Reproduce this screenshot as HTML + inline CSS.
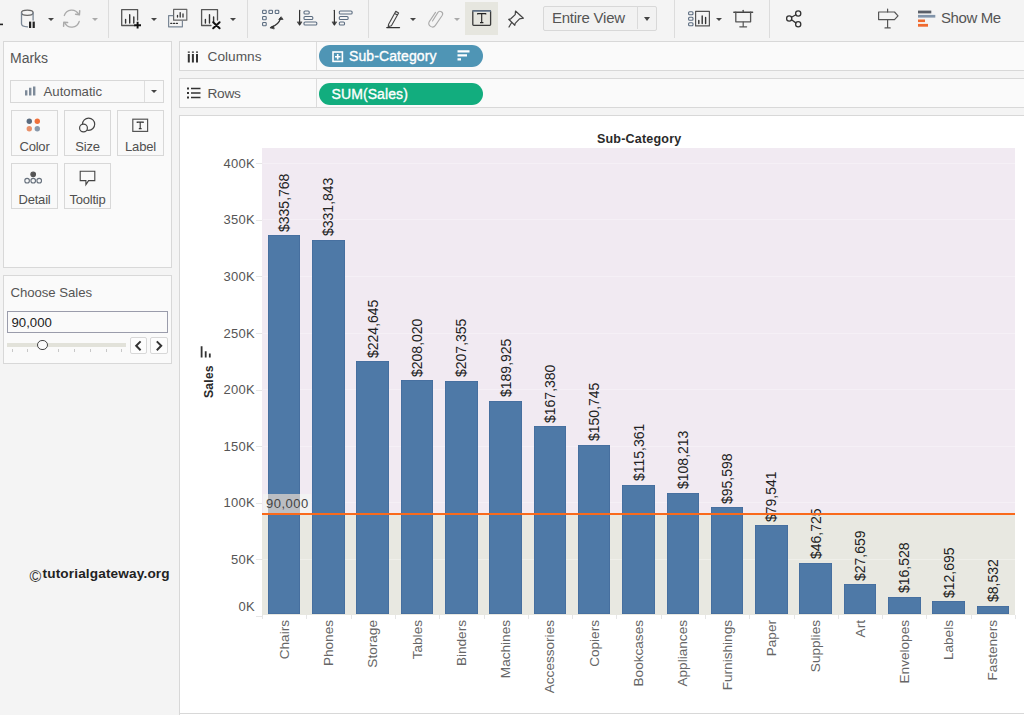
<!DOCTYPE html><html><head><meta charset="utf-8"><style>
*{margin:0;padding:0;box-sizing:border-box}
html,body{width:1024px;height:715px;overflow:hidden;background:#f4f4f4;font-family:"Liberation Sans",sans-serif;position:relative}
.a{position:absolute}
#tb{left:0;top:0;width:1024px;height:40px;background:#f4f4f4}
.sep{position:absolute;top:0;width:1px;height:38px;background:#dcdcdc}
.dd{position:absolute;width:0;height:0;border-left:3px solid transparent;border-right:3px solid transparent;border-top:3.6px solid #444}
.card{position:absolute;background:#fafafa;border:1px solid #d8d8d8}
.btn{position:absolute;background:#f9f9f9;border:1px solid #d8d8d8;font-size:13px;letter-spacing:-0.2px;color:#505050;text-align:center;width:47px;height:46px}
.btn span{position:absolute;left:-5px;right:-5px;top:28px}
.btn svg{position:absolute;left:0;top:0}
.shelf{position:absolute;left:179px;width:845px;height:30px;background:#fafafa;border:1px solid #d8d8d8;border-right:none}
.pill{position:absolute;left:319px;width:164px;height:22px;border-radius:11px;color:#fff;font-size:14px;-webkit-text-stroke:0.35px #fff}
.yl{position:absolute;font-size:13px;letter-spacing:0.3px;color:#555;text-align:right;width:60px;left:195px;line-height:16px}
.bar{position:absolute;background:#4e79a7;box-shadow:inset 0 0 0 0.6px #41699a}
.vl{position:absolute;font-size:14px;line-height:16px;color:#222;white-space:nowrap;transform-origin:0 0;transform:rotate(-90deg)}
.cl{position:absolute;font-size:13.6px;line-height:16px;color:#666;white-space:nowrap;transform-origin:0 0;transform:rotate(-90deg)}
.grid{position:absolute;left:263px;width:752px;height:1px;background:rgba(255,255,255,0.3)}
</style></head><body>
<div id="tb" class="a"></div>
<div class="sep" style="left:108px"></div>
<div class="sep" style="left:247px"></div>
<div class="sep" style="left:368px"></div>
<div class="sep" style="left:674px"></div>
<div class="sep" style="left:769px"></div>
<div class="dd" style="left:47.8px;top:17.5px;border-top-color:#444"></div>
<div class="dd" style="left:91.8px;top:17.5px;border-top-color:#aaa"></div>
<div class="dd" style="left:151px;top:17.5px;border-top-color:#444"></div>
<div class="dd" style="left:230.4px;top:17.5px;border-top-color:#444"></div>
<div class="dd" style="left:410px;top:17.5px;border-top-color:#444"></div>
<div class="dd" style="left:454px;top:17.5px;border-top-color:#aaa"></div>
<div class="dd" style="left:715.8px;top:17.5px;border-top-color:#444"></div>
<div class="a" style="left:543px;top:5.5px;width:114px;height:25px;border:1px solid #d8d8d8;background:#f2f2f2;border-radius:2px"></div>
<div class="a" style="left:637px;top:6px;width:1px;height:23px;background:#dadada"></div>
<div class="a" style="left:552px;top:9px;font-size:15px;letter-spacing:-0.25px;color:#555">Entire View</div>
<div class="dd" style="left:643.8px;top:16.8px;border-left-width:3.4px;border-right-width:3.4px;border-top-width:4px"></div>
<div class="a" style="left:941px;top:9px;font-size:15px;letter-spacing:-0.4px;color:#555">Show Me</div>
<svg class="a" style="left:0;top:0" width="1024" height="40" viewBox="0 0 1024 40">
<g fill="none" stroke-linecap="round" stroke-linejoin="round">
<rect x="0" y="23.6" width="3" height="1.6" fill="#222" stroke="none"/>
<!-- cylinder -->
<ellipse cx="27.3" cy="12.8" rx="5.8" ry="2.6" stroke="#666" stroke-width="1.3"/>
<path d="M21.5,12.8 V23.8 Q21.5,26.6 27.5,26.8" stroke="#7a8796" stroke-width="1.3"/>
<path d="M33.1,12.8 V20" stroke="#7a8796" stroke-width="1.3"/>
<rect x="29" y="21.6" width="2.2" height="6.4" fill="#222" stroke="none"/>
<rect x="32.6" y="21.6" width="2.2" height="6.4" fill="#222" stroke="none"/>
<!-- refresh -->
<path d="M64.3,15.5 A7.8,7.8 0 0 1 78.6,14.3" stroke="#aaa" stroke-width="1.3"/>
<path d="M79.4,14.8 l0.3,-4 M79.4,14.8 l-3.8,-0.6" stroke="#aaa" stroke-width="1.5"/>
<path d="M79.2,21.5 A7.8,7.8 0 0 1 64.6,22.6" stroke="#aaa" stroke-width="1.3"/>
<path d="M63.8,22.2 l-0.2,4 M63.8,22.2 l3.8,0.4" stroke="#aaa" stroke-width="1.5"/>
<!-- new worksheet -->
<path d="M135,25.5 H121.7 V9.6 H137.6 V20" stroke="#555" stroke-width="1.3"/>
<path d="M125.6,19.5 V23 M129.7,14.8 V23 M133.8,17 V23" stroke="#333" stroke-width="1.4"/>
<path d="M137.6,21.8 V28.6 M134.2,25.2 H141" stroke="#111" stroke-width="1.9" stroke-linecap="butt"/>
<!-- duplicate -->
<rect x="173.6" y="9.4" width="13.2" height="10.8" stroke="#666" stroke-width="1.2"/>
<path d="M177.5,17 V15.5 M180.2,17 V12.6 M183,17 V14" stroke="#333" stroke-width="1.3"/>
<path d="M173,15.6 H168.6 V26.8 H182.4 V21" stroke="#7a8796" stroke-width="1.2"/>
<path d="M170.8,23.4 h1 M173.6,23.4 h1 M176.4,23.4 h1" stroke="#333" stroke-width="1.3"/>
<!-- clear -->
<path d="M211,25.5 H201.6 V9.6 H217.5 V20" stroke="#555" stroke-width="1.3"/>
<path d="M205.4,19.5 V23 M209.5,14.8 V23 M213.6,17 V22" stroke="#333" stroke-width="1.4"/>
<path d="M213.2,22.3 L219.6,28.2 M219.6,22.3 L213.2,28.2" stroke="#111" stroke-width="2"/>
<!-- swap -->
<g stroke="#5b6c80" stroke-width="1.1">
<rect x="262.6" y="10.3" width="3.6" height="3.2" rx="0.8"/>
<rect x="268.9" y="10.3" width="3.6" height="3.2" rx="0.8"/>
<rect x="275.2" y="10.3" width="3.6" height="3.2" rx="0.8"/>
<rect x="262.6" y="16.5" width="3.6" height="3.2" rx="0.8"/>
<rect x="262.6" y="22.5" width="3.6" height="3.2" rx="0.8"/>
</g>
<path d="M271,27.3 Q278.5,25 280.8,18" stroke="#333" stroke-width="1.2"/>
<path d="M280.9,17 l-2.2,2.4 h4 z M270.3,27.6 l3.2,-1.8 l0.6,2.8 z" fill="#333" stroke="#333" stroke-width="0.8"/>
<!-- sort asc -->
<path d="M299.6,10.3 V24.5" stroke="#333" stroke-width="1.2"/>
<path d="M297.4,22.2 L299.6,25.4 L301.8,22.2 Z" fill="#333" stroke="#333" stroke-width="0.6"/>
<g stroke="#5b6c80" stroke-width="1.1">
<rect x="304" y="11" width="5.2" height="3" rx="1.1"/>
<rect x="304" y="16.5" width="8.8" height="3" rx="1.1"/>
<rect x="304" y="22" width="12.8" height="3" rx="1.1"/>
</g>
<!-- sort desc -->
<path d="M334.4,10.3 V24.5" stroke="#333" stroke-width="1.2"/>
<path d="M332.2,22.2 L334.4,25.4 L336.6,22.2 Z" fill="#333" stroke="#333" stroke-width="0.6"/>
<g stroke="#5b6c80" stroke-width="1.1">
<rect x="339.3" y="11" width="12.8" height="3" rx="1.1"/>
<rect x="339.3" y="16.5" width="8.8" height="3" rx="1.1"/>
<rect x="339.3" y="22" width="5.2" height="3" rx="1.1"/>
</g>
<!-- pen -->
<path d="M388.6,24.2 L395.8,11.3 L398.6,12.9 L391.4,25.8 L388.2,26.6 Z M394.6,13.4 L397.4,15" stroke="#444" stroke-width="1.1"/>
<path d="M386.8,27.6 H399.5" stroke="#333" stroke-width="1.3"/>
<!-- paperclip -->
<path d="M432.5,21 L437.8,12.6 A2.6,2.6 0 0 1 442.3,15.2 L435.4,25.4 A3.6,3.6 0 0 1 429.3,21.6 L435.5,12.4" stroke="#aaa" stroke-width="1.1"/>
<!-- T button -->
<rect x="465" y="2" width="33" height="33" fill="#e6e6df" stroke="none"/>
<rect x="472.8" y="10.6" width="17.8" height="14.8" rx="0.8" stroke="#3a3a3a" stroke-width="1.3"/>
<path d="M473,11 H490.4" stroke="#6b7f96" stroke-width="1.4"/>
<path d="M477.6,14.5 V13.6 H485.8 V14.5 M481.7,13.6 V22.6 M480,22.6 H483.4" stroke="#222" stroke-width="1.1" stroke-linecap="butt"/>
<!-- pin -->
<path d="M515.5,11 L523.4,18.2 L519.5,18.8 L515.2,23.3 L514.8,25.3 L508.7,19.3 L510.8,18.8 L515.2,14.6 Z M511.8,22.2 L509,27" stroke="#444" stroke-width="1.2"/>
<!-- fit -->
<g stroke="#5b6c80" stroke-width="1.1">
<rect x="688.6" y="11.8" width="4.4" height="3" rx="1"/>
<rect x="688.6" y="17.3" width="4.4" height="3" rx="1"/>
<rect x="688.6" y="22.7" width="4.4" height="3" rx="1"/>
</g>
<rect x="695.6" y="11.3" width="13.8" height="14.6" stroke="#555" stroke-width="1.2"/>
<path d="M698.8,23.5 V20.5 M702.2,23.5 V16 M705.6,23.5 V17.5" stroke="#333" stroke-width="1.4"/>
<!-- presentation -->
<path d="M733.8,12.2 H752.6" stroke="#444" stroke-width="1.4"/>
<path d="M743.2,10.3 V12" stroke="#444" stroke-width="1.2"/>
<path d="M735.8,12.2 V21.8 H750.6 V12.2" stroke="#555" stroke-width="1.3"/>
<path d="M743.2,22 V26.6 M739.8,26.8 H746.6" stroke="#555" stroke-width="1.2"/>
<!-- share -->
<circle cx="798.2" cy="13.5" r="2.6" stroke="#333" stroke-width="1.3"/>
<circle cx="789.2" cy="18.5" r="2.6" stroke="#333" stroke-width="1.3"/>
<circle cx="798.2" cy="24.3" r="2.6" stroke="#333" stroke-width="1.3"/>
<path d="M791.5,17.2 L795.9,14.8 M791.5,19.8 L795.9,22.9" stroke="#333" stroke-width="1.3"/>
<!-- signpost -->
<path d="M878.6,12 H894.5 L898,15.8 L894.5,19.6 H878.6 Z" stroke="#555" stroke-width="1.2"/>
<path d="M887.6,9 V12 M887.6,19.6 V27.8 M885,27.9 H890.2" stroke="#555" stroke-width="1.2"/>
</g>
<!-- show me -->
<rect x="918" y="10.6" width="13.3" height="2.8" fill="#5a5f68"/>
<rect x="918" y="14.9" width="17.3" height="2.7" fill="#8194aa"/>
<rect x="918" y="19.5" width="7" height="2.6" fill="#ef6a2f"/>
<rect x="918" y="23.9" width="10" height="2.8" fill="#ef6a2f"/>
</svg>
<div class="card" style="left:3px;top:41px;width:169px;height:227px"></div>
<div class="a" style="left:10px;top:50px;font-size:14px;color:#555">Marks</div>
<div class="a" style="left:10px;top:80px;width:154px;height:23px;border:1px solid #d8d8d8;background:#f9f9f9"></div>
<div class="a" style="left:144px;top:81px;width:1px;height:21px;background:#dedede"></div>
<div class="dd" style="left:150.5px;top:90px"></div>
<svg class="a" style="left:20px;top:84px" width="20" height="14"><path d="M6.2,11.6 V6.2 M10.2,11.6 V3.8 M14.2,11.6 V2.4" stroke="#7d8a99" stroke-width="2.4"/></svg>
<div class="a" style="left:43.5px;top:84px;font-size:13.2px;color:#555">Automatic</div>
<div class="btn" style="left:11px;top:110px"><svg width="47" height="46"><circle cx="17.3" cy="10.2" r="2.7" fill="#5a6b7f"/><circle cx="25.3" cy="10.2" r="2.7" fill="#f0703a"/><circle cx="17.3" cy="17.8" r="2.7" fill="#e8906a"/><circle cx="25.3" cy="17.8" r="2.7" fill="#8898ab"/></svg><span>Color</span></div>
<div class="btn" style="left:64px;top:110px"><svg width="47" height="46" fill="none" stroke="#444" stroke-width="1.2"><circle cx="23.6" cy="13.2" r="6.1"/><circle cx="18.5" cy="17" r="3.9" fill="#f9f9f9"/></svg><span>Size</span></div>
<div class="btn" style="left:117px;top:110px"><svg width="47" height="46" fill="none"><rect x="14.8" y="8.2" width="14.8" height="12.2" stroke="#555" stroke-width="1.2"/><path d="M19.2,12 V11.1 H25.2 V12 M22.2,11.1 V17.6 M20.8,17.6 H23.6" stroke="#333" stroke-width="1.1"/></svg><span>Label</span></div>
<div class="btn" style="left:11px;top:163px"><svg width="47" height="46" fill="none" stroke="#66707c" stroke-width="1.1"><circle cx="21.2" cy="10.3" r="2.3" fill="#555" stroke="#555"/><circle cx="15.1" cy="16.7" r="2.3"/><circle cx="21.2" cy="16.7" r="2.3"/><circle cx="27.2" cy="16.7" r="2.3"/></svg><span>Detail</span></div>
<div class="btn" style="left:64px;top:163px"><svg width="47" height="46" fill="none" stroke="#444" stroke-width="1.1"><path d="M15.2,7.2 H29.8 V16.6 H23.6 L20.9,20.6 V16.6 H15.2 Z"/></svg><span>Tooltip</span></div>
<div class="card" style="left:3px;top:275px;width:169px;height:89px"></div>
<div class="a" style="left:10.5px;top:285px;font-size:13.2px;letter-spacing:-0.05px;color:#555">Choose Sales</div>
<div class="a" style="left:7px;top:311px;width:161px;height:22px;border:1px solid #9a9cab;background:#fafafa"></div>
<div class="a" style="left:11.5px;top:314.7px;font-size:13.2px;color:#222">90,000</div>
<div class="a" style="left:7px;top:342.8px;width:119px;height:4.3px;background:#e2e2da"></div>
<div class="a" style="left:12px;top:349px;width:1px;height:3px;background:#c8c8c8"></div>
<div class="a" style="left:27.4px;top:349px;width:1px;height:3px;background:#c8c8c8"></div>
<div class="a" style="left:58.1px;top:349px;width:1px;height:3px;background:#c8c8c8"></div>
<div class="a" style="left:74.4px;top:349px;width:1px;height:3px;background:#c8c8c8"></div>
<div class="a" style="left:90.3px;top:349px;width:1px;height:3px;background:#c8c8c8"></div>
<div class="a" style="left:105.6px;top:349px;width:1px;height:3px;background:#c8c8c8"></div>
<div class="a" style="left:121px;top:349px;width:1px;height:3px;background:#c8c8c8"></div>
<div class="a" style="left:37.4px;top:339.6px;width:10.6px;height:10.6px;border-radius:50%;border:1.4px solid #444;background:#fafafa"></div>
<div class="a" style="left:129.5px;top:336.5px;width:17.5px;height:17.3px;border:1px solid #d8d8d8;border-radius:2px;background:#fdfdfd"></div>
<div class="a" style="left:150.4px;top:336.5px;width:17.3px;height:17.3px;border:1px solid #d8d8d8;border-radius:2px;background:#fdfdfd"></div>
<svg class="a" style="left:130px;top:337px" width="40" height="17" fill="none" stroke="#333" stroke-width="2"><path d="M10.6,4.4 L6.2,8.8 L10.6,13.2 M26.8,4.4 L31.2,8.8 L26.8,13.2"/></svg>
<div class="a" style="left:29.5px;top:566.5px;font-size:16px;color:#333;line-height:20px">©</div>
<div class="a" style="left:42.5px;top:566px;font-size:13.6px;font-weight:bold;color:#222;letter-spacing:0.15px;line-height:16px">tutorialgateway.org</div>
<div class="shelf" style="top:41px"></div>
<div class="shelf" style="top:78px"></div>
<div class="a" style="left:316px;top:42px;width:1px;height:28px;background:#dcdcdc"></div>
<div class="a" style="left:316px;top:79px;width:1px;height:28px;background:#dcdcdc"></div>
<svg class="a" style="left:185.5px;top:48.5px" width="16" height="16"><path d="M2.8,5 V13.4 M6.9,5 V13.4 M11,5 V13.4" stroke="#333" stroke-width="2"/><path d="M2.8,2.6 V3.7 M6.9,2.6 V3.7 M11,2.6 V3.7" stroke="#333" stroke-width="2"/></svg>
<svg class="a" style="left:185.5px;top:86px" width="16" height="16"><path d="M1,2.5 H3 M1,7 H3 M1,11.5 H3" stroke="#333" stroke-width="2"/><path d="M5,2.5 H14.5 M5,7 H14.5 M5,11.5 H14.5" stroke="#333" stroke-width="1.6"/></svg>
<div class="a" style="left:207.5px;top:48.5px;font-size:13.7px;color:#555">Columns</div>
<div class="a" style="left:207.5px;top:86px;font-size:13.7px;letter-spacing:-0.3px;color:#555">Rows</div>
<div class="pill" style="top:45px;background:#4f95b5"><svg class="a" style="left:13px;top:5.5px" width="12" height="12" fill="none" stroke="#fff" stroke-width="1.6"><rect x="1" y="1" width="9.4" height="9.4"/><path d="M5.7,3 V8.4 M3,5.7 H8.4"/></svg><div class="a" style="left:30px;top:3px;letter-spacing:0.1px">Sub-Category</div><svg class="a" style="left:138px;top:5px" width="16" height="12"><path d="M0.5,1.4 H12.5 M0.5,5.4 H10 M0.5,9.4 H4" stroke="#fff" stroke-width="2.4"/></svg></div>
<div class="pill" style="top:83px;background:#12ad7e"><div class="a" style="left:12.5px;top:3px;letter-spacing:0.1px">SUM(Sales)</div></div>
<div class="a" style="left:179px;top:115px;width:845px;height:600px;background:#fff;border-top:1px solid #d8d8d8;border-left:1px solid #d8d8d8"></div>
<div class="a" style="left:179px;top:713px;width:845px;height:1px;background:#d8d8d8"></div>
<div class="a" style="left:597px;top:131.5px;font-size:12.5px;font-weight:bold;letter-spacing:0.2px;color:#2a2a2a">Sub-Category</div>
<div class="a" style="left:262px;top:148px;width:753px;height:365.547px;background:#f1eaf2"></div>
<div class="a" style="left:262px;top:513.547px;width:753px;height:101.45299999999997px;background:#e8e8e1"></div>
<div class="grid" style="top:615.4px"></div>
<div class="a" style="left:256px;top:615.9px;width:6px;height:1px;background:#e6e6e6"></div>
<div class="yl" style="top:599.4px">0K</div>
<div class="grid" style="top:558.8px"></div>
<div class="a" style="left:256px;top:559.3px;width:6px;height:1px;background:#e6e6e6"></div>
<div class="yl" style="top:551.8px">50K</div>
<div class="grid" style="top:502.2px"></div>
<div class="a" style="left:256px;top:502.7px;width:6px;height:1px;background:#e6e6e6"></div>
<div class="yl" style="top:495.2px">100K</div>
<div class="grid" style="top:445.6px"></div>
<div class="a" style="left:256px;top:446.1px;width:6px;height:1px;background:#e6e6e6"></div>
<div class="yl" style="top:438.6px">150K</div>
<div class="grid" style="top:389.1px"></div>
<div class="a" style="left:256px;top:389.6px;width:6px;height:1px;background:#e6e6e6"></div>
<div class="yl" style="top:382.1px">200K</div>
<div class="grid" style="top:332.5px"></div>
<div class="a" style="left:256px;top:333.0px;width:6px;height:1px;background:#e6e6e6"></div>
<div class="yl" style="top:325.5px">250K</div>
<div class="grid" style="top:275.9px"></div>
<div class="a" style="left:256px;top:276.4px;width:6px;height:1px;background:#e6e6e6"></div>
<div class="yl" style="top:268.9px">300K</div>
<div class="grid" style="top:219.3px"></div>
<div class="a" style="left:256px;top:219.8px;width:6px;height:1px;background:#e6e6e6"></div>
<div class="yl" style="top:212.3px">350K</div>
<div class="grid" style="top:162.7px"></div>
<div class="a" style="left:256px;top:163.2px;width:6px;height:1px;background:#e6e6e6"></div>
<div class="yl" style="top:155.7px">400K</div>
<div class="bar" style="left:267.8px;top:235.4px;width:32.6px;height:378.8px"></div>
<div class="vl" style="left:276.1px;top:231.9px">$335,768</div>
<div class="cl" style="left:276.6px;top:620px"><span style="display:inline-block;transform:translateX(-100%)">Chairs</span></div>
<div class="bar" style="left:312.1px;top:239.9px;width:32.6px;height:374.3px"></div>
<div class="vl" style="left:320.4px;top:236.4px">$331,843</div>
<div class="cl" style="left:320.9px;top:620px"><span style="display:inline-block;transform:translateX(-100%)">Phones</span></div>
<div class="bar" style="left:356.4px;top:361.2px;width:32.6px;height:253.0px"></div>
<div class="vl" style="left:364.7px;top:357.7px">$224,645</div>
<div class="cl" style="left:365.2px;top:620px"><span style="display:inline-block;transform:translateX(-100%)">Storage</span></div>
<div class="bar" style="left:400.7px;top:380.0px;width:32.6px;height:234.2px"></div>
<div class="vl" style="left:409.0px;top:376.5px">$208,020</div>
<div class="cl" style="left:409.5px;top:620px"><span style="display:inline-block;transform:translateX(-100%)">Tables</span></div>
<div class="bar" style="left:445.0px;top:380.7px;width:32.6px;height:233.5px"></div>
<div class="vl" style="left:453.3px;top:377.2px">$207,355</div>
<div class="cl" style="left:453.8px;top:620px"><span style="display:inline-block;transform:translateX(-100%)">Binders</span></div>
<div class="bar" style="left:489.3px;top:400.5px;width:32.6px;height:213.7px"></div>
<div class="vl" style="left:497.6px;top:397.0px">$189,925</div>
<div class="cl" style="left:498.1px;top:620px"><span style="display:inline-block;transform:translateX(-100%)">Machines</span></div>
<div class="bar" style="left:533.6px;top:426.0px;width:32.6px;height:188.2px"></div>
<div class="vl" style="left:541.9px;top:422.5px">$167,380</div>
<div class="cl" style="left:542.4px;top:620px"><span style="display:inline-block;transform:translateX(-100%)">Accessories</span></div>
<div class="bar" style="left:577.9px;top:444.8px;width:32.6px;height:169.4px"></div>
<div class="vl" style="left:586.2px;top:441.3px">$150,745</div>
<div class="cl" style="left:586.7px;top:620px"><span style="display:inline-block;transform:translateX(-100%)">Copiers</span></div>
<div class="bar" style="left:622.2px;top:484.8px;width:32.6px;height:129.4px"></div>
<div class="vl" style="left:630.5px;top:481.3px">$115,361</div>
<div class="cl" style="left:631.0px;top:620px"><span style="display:inline-block;transform:translateX(-100%)">Bookcases</span></div>
<div class="bar" style="left:666.5px;top:492.9px;width:32.6px;height:121.3px"></div>
<div class="vl" style="left:674.8px;top:489.4px">$108,213</div>
<div class="cl" style="left:675.3px;top:620px"><span style="display:inline-block;transform:translateX(-100%)">Appliances</span></div>
<div class="bar" style="left:710.8px;top:507.2px;width:32.6px;height:107.0px"></div>
<div class="vl" style="left:719.1px;top:503.7px">$95,598</div>
<div class="cl" style="left:719.6px;top:620px"><span style="display:inline-block;transform:translateX(-100%)">Furnishings</span></div>
<div class="bar" style="left:755.1px;top:525.4px;width:32.6px;height:88.8px"></div>
<div class="vl" style="left:763.4px;top:521.9px">$79,541</div>
<div class="cl" style="left:763.9px;top:620px"><span style="display:inline-block;transform:translateX(-100%)">Paper</span></div>
<div class="bar" style="left:799.4px;top:562.5px;width:32.6px;height:51.7px"></div>
<div class="vl" style="left:807.7px;top:559.0px">$46,725</div>
<div class="cl" style="left:808.2px;top:620px"><span style="display:inline-block;transform:translateX(-100%)">Supplies</span></div>
<div class="bar" style="left:843.7px;top:584.1px;width:32.6px;height:30.1px"></div>
<div class="vl" style="left:852.0px;top:580.6px">$27,659</div>
<div class="cl" style="left:852.5px;top:620px"><span style="display:inline-block;transform:translateX(-100%)">Art</span></div>
<div class="bar" style="left:888.0px;top:596.7px;width:32.6px;height:17.5px"></div>
<div class="vl" style="left:896.3px;top:593.2px">$16,528</div>
<div class="cl" style="left:896.8px;top:620px"><span style="display:inline-block;transform:translateX(-100%)">Envelopes</span></div>
<div class="bar" style="left:932.3px;top:601.0px;width:32.6px;height:13.2px"></div>
<div class="vl" style="left:940.6px;top:597.5px">$12,695</div>
<div class="cl" style="left:941.1px;top:620px"><span style="display:inline-block;transform:translateX(-100%)">Labels</span></div>
<div class="bar" style="left:976.6px;top:605.7px;width:32.6px;height:8.5px"></div>
<div class="vl" style="left:984.9px;top:602.2px">$8,532</div>
<div class="cl" style="left:985.4px;top:620px"><span style="display:inline-block;transform:translateX(-100%)">Fasteners</span></div>
<div class="a" style="left:262.0px;top:615px;width:1px;height:3.5px;background:#e6e6e6"></div>
<div class="a" style="left:306.3px;top:615px;width:1px;height:3.5px;background:#e6e6e6"></div>
<div class="a" style="left:350.6px;top:615px;width:1px;height:3.5px;background:#e6e6e6"></div>
<div class="a" style="left:394.9px;top:615px;width:1px;height:3.5px;background:#e6e6e6"></div>
<div class="a" style="left:439.2px;top:615px;width:1px;height:3.5px;background:#e6e6e6"></div>
<div class="a" style="left:483.5px;top:615px;width:1px;height:3.5px;background:#e6e6e6"></div>
<div class="a" style="left:527.8px;top:615px;width:1px;height:3.5px;background:#e6e6e6"></div>
<div class="a" style="left:572.1px;top:615px;width:1px;height:3.5px;background:#e6e6e6"></div>
<div class="a" style="left:616.4px;top:615px;width:1px;height:3.5px;background:#e6e6e6"></div>
<div class="a" style="left:660.6px;top:615px;width:1px;height:3.5px;background:#e6e6e6"></div>
<div class="a" style="left:704.9px;top:615px;width:1px;height:3.5px;background:#e6e6e6"></div>
<div class="a" style="left:749.2px;top:615px;width:1px;height:3.5px;background:#e6e6e6"></div>
<div class="a" style="left:793.5px;top:615px;width:1px;height:3.5px;background:#e6e6e6"></div>
<div class="a" style="left:837.8px;top:615px;width:1px;height:3.5px;background:#e6e6e6"></div>
<div class="a" style="left:882.1px;top:615px;width:1px;height:3.5px;background:#e6e6e6"></div>
<div class="a" style="left:926.4px;top:615px;width:1px;height:3.5px;background:#e6e6e6"></div>
<div class="a" style="left:970.7px;top:615px;width:1px;height:3.5px;background:#e6e6e6"></div>
<div class="a" style="left:1015.0px;top:615px;width:1px;height:3.5px;background:#e6e6e6"></div>
<div class="a" style="left:262px;top:512.7px;width:753px;height:2px;background:#f96a1c"></div>
<div class="a" style="left:263px;top:494px;width:48px;height:19px;background:#f3f3f3"></div>
<div class="a" style="left:268px;top:494px;width:32px;height:19px;background:#bbbec3"></div>
<div class="a" style="left:266px;top:496px;font-size:13px;letter-spacing:0.5px;line-height:16px;color:#444">90,000</div>
<div class="a" style="left:201.5px;top:397.5px;font-size:12.2px;font-weight:bold;letter-spacing:0.2px;color:#2a2a2a;transform-origin:0 0;transform:rotate(-90deg);white-space:nowrap">Sales</div>
<svg class="a" style="left:200px;top:345px" width="13" height="14"><path d="M1.6,1.2 V12.4 M5.7,6.2 V12.4 M9.8,8.6 V12.4" stroke="#333" stroke-width="1.8"/></svg>
</body></html>
